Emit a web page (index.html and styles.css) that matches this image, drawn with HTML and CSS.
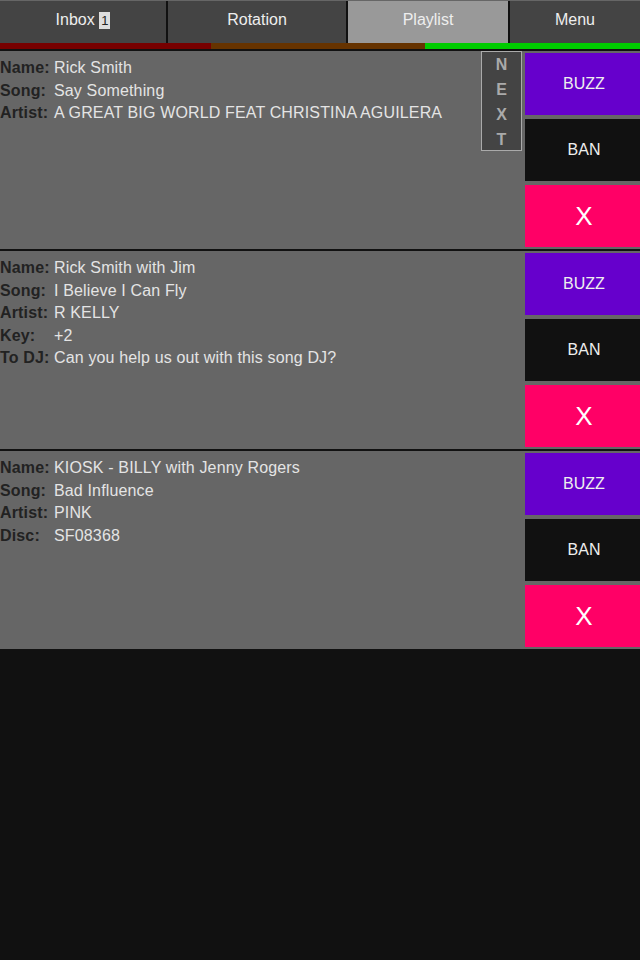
FILE: index.html
```html
<!DOCTYPE html>
<html lang="en">

    <head>
        <meta charset="UTF-8">
        <meta name="viewport" content="width=device-width, initial-scale=1.0">
        <title>Playlist</title>
        <link rel="stylesheet" href="styles.css">
    </head>

    <body>
        <nav class="tabs">
            <a class="tab tab-inbox" href="#inbox">Inbox <span class="badge">1</span></a>
            <a class="tab tab-rotation" href="#rotation">Rotation</a>
            <a class="tab tab-playlist active" href="#playlist">Playlist</a>
            <a class="tab tab-menu" href="#menu">Menu</a>
        </nav>
        <div class="status-bar">
            <span class="seg seg-red"></span>
            <span class="seg seg-brown"></span>
            <span class="seg seg-green"></span>
        </div>

        <main class="requests">
            <section class="request">
                <div class="info">
                    <span class="label">Name:</span><span class="value">Rick Smith</span>
                    <span class="label">Song:</span><span class="value">Say Something</span>
                    <span class="label">Artist:</span><span class="value">A GREAT BIG WORLD FEAT CHRISTINA AGUILERA</span>
                </div>
                <div class="next">
                    <span>N</span><span>E</span><span>X</span><span>T</span>
                </div>
                <div class="actions">
                    <button class="btn buzz">BUZZ</button>
                    <button class="btn ban">BAN</button>
                    <button class="btn remove">X</button>
                </div>
            </section>

            <section class="request">
                <div class="info">
                    <span class="label">Name:</span><span class="value">Rick Smith with Jim</span>
                    <span class="label">Song:</span><span class="value">I Believe I Can Fly</span>
                    <span class="label">Artist:</span><span class="value">R KELLY</span>
                    <span class="label">Key:</span><span class="value">+2</span>
                    <span class="label">To DJ:</span><span class="value">Can you help us out with this song DJ?</span>
                </div>
                <div class="actions">
                    <button class="btn buzz">BUZZ</button>
                    <button class="btn ban">BAN</button>
                    <button class="btn remove">X</button>
                </div>
            </section>

            <section class="request">
                <div class="info">
                    <span class="label">Name:</span><span class="value">KIOSK - BILLY with Jenny Rogers</span>
                    <span class="label">Song:</span><span class="value">Bad Influence</span>
                    <span class="label">Artist:</span><span class="value">PINK</span>
                    <span class="label">Disc:</span><span class="value">SF08368</span>
                </div>
                <div class="actions">
                    <button class="btn buzz">BUZZ</button>
                    <button class="btn ban">BAN</button>
                    <button class="btn remove">X</button>
                </div>
            </section>
        </main>
    </body>

</html>
```

FILE: styles.css
```css
:root {
    --page-bg: #111;
    --row-bg: #666;
    --tab-bg: #444;
    --tab-active: #999;
    --text-light: #e4e4e4;
    --label-dark: #222;
    --buzz: #6600cc;
    --remove: #ff0066;
}

*,
*::before,
*::after {
    box-sizing: border-box;
}

body {
    margin: 0;
    font-family: "Liberation Sans", Arial, sans-serif;
    font-size: 16px;
    background: var(--page-bg);
    color: var(--text-light);
}

.tabs {
    display: flex;
    gap: 2px;
    border-top: 1px solid #666;
    background: var(--page-bg);
}

.tab {
    height: 42px;
    padding-top: 9px;
    line-height: 19px;
    text-align: center;
    text-decoration: none;
    color: #eee;
    background: var(--tab-bg);
}

.tab-inbox {
    width: 166px;
}

.tab-rotation {
    width: 178px;
}

.tab-playlist {
    width: 160px;
}

.tab-menu {
    flex: 1;
}

.tab.active {
    background: var(--tab-active);
}

.badge {
    display: inline-block;
    padding: 0 2px;
    font-size: 13px;
    line-height: 17px;
    color: #222;
    background: #ddd;
}

.status-bar {
    display: flex;
    height: 6px;
}

.seg-red {
    width: 211px;
    background: #700;
}

.seg-brown {
    width: 214px;
    background: #630;
}

.seg-green {
    flex: 1;
    background: #0c0;
}

.request {
    display: flex;
    border-top: 2px solid var(--page-bg);
    background: var(--row-bg);
}

.info {
    flex: 1;
    display: grid;
    grid-template-columns: 54px 1fr;
    align-content: start;
    padding-top: 6px;
    line-height: 22.5px;
    letter-spacing: 0.15px;
}

.label {
    font-weight: bold;
    color: var(--label-dark);
}

.value {
    color: var(--text-light);
}

.next {
    display: flex;
    flex-direction: column;
    align-items: center;
    width: 41px;
    height: 100px;
    margin-right: 3px;
    border: 1px solid #aaa;
    background: var(--tab-bg);
    color: #aaa;
    font-weight: bold;
    line-height: 25px;
}

.actions {
    display: flex;
    flex-direction: column;
    gap: 4px;
    width: 115px;
    padding: 2px 0;
}

.btn {
    height: 62px;
    border: none;
    padding: 0 0 0 3px;
    font-family: inherit;
    font-size: 16px;
    color: #eee;
    cursor: pointer;
}

.buzz {
    background: var(--buzz);
}

.ban {
    background: var(--page-bg);
}

.remove {
    font-size: 26px;
    color: #fff;
    background: var(--remove);
}
```
